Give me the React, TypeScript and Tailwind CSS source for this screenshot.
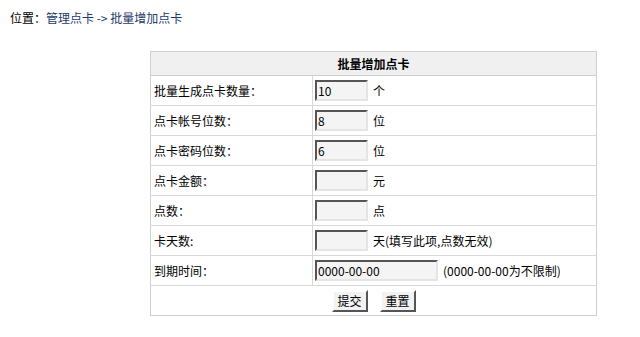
const font = { fontFamily: '"Noto Sans CJK SC", "Noto Sans", sans-serif' };

const rows = [
  { label: "批量生成点卡数量：", value: "10", unit: "个" },
  { label: "点卡帐号位数：", value: "8", unit: "位" },
  { label: "点卡密码位数：", value: "6", unit: "位" },
  { label: "点卡金额：", value: "", unit: "元" },
  { label: "点数：", value: "", unit: "点" },
  { label: "卡天数:", value: "", unit: "天(填写此项,点数无效)" },
];

function Field({ value, wide }: { value: string; wide?: boolean }) {
  return (
    <input
      readOnly
      value={value}
      className={`${wide ? "w-[123px]" : "w-[53px]"} h-[21px] px-[1px] text-[12px] text-black bg-[#f4f4f4] border-2 border-t-[#555] border-l-[#555] border-b-[#e4e4e4] border-r-[#e4e4e4] outline-none align-middle`}
      style={font}
    />
  );
}

function Btn({ children }: { children: string }) {
  return (
    <button
      className="h-[22px] w-[36px] text-[12px] text-black bg-[#f2f2f2] border-2 border-t-white border-l-white border-b-[#555] border-r-[#555] leading-none"
      style={font}
    >
      {children}
    </button>
  );
}

export default function App() {
  return (
    <div className="w-[640px] h-[337px] bg-white text-[12px] text-black" style={font}>
      <div className="pt-[10px] pl-[10px] leading-[16px]">
        位置：<span className="text-[#1d3b6c]">管理点卡 -&gt; 批量增加点卡</span>
      </div>

      <table className="mt-[25px] ml-[150px] w-[447px] border-collapse border border-[#cfcfcf]">
        <tbody>
          <tr className="h-[24px] bg-[#f0f0f0]">
            <td colSpan={2} className="text-center font-bold border-b border-[#cfcfcf]">
              批量增加点卡
            </td>
          </tr>
          {rows.map((r) => (
            <tr key={r.label} className="h-[30px]">
              <td className="w-[162px] pl-[3px] border-b border-r border-[#d8d8d8]">{r.label}</td>
              <td className="pl-[2px] border-b border-[#d8d8d8]">
                <Field value={r.value} />
                <span className="ml-[5px] align-middle">{r.unit}</span>
              </td>
            </tr>
          ))}
          <tr className="h-[30px]">
            <td className="pl-[3px] border-b border-r border-[#d8d8d8]">到期时间：</td>
            <td className="pl-[2px] border-b border-[#d8d8d8]">
              <Field value="0000-00-00" wide />
              <span className="ml-[5px] align-middle">(0000-00-00为不限制)</span>
            </td>
          </tr>
          <tr className="h-[30px]">
            <td colSpan={2}>
              <div className="flex justify-center gap-[12px]">
                <Btn>提交</Btn>
                <Btn>重置</Btn>
              </div>
            </td>
          </tr>
        </tbody>
      </table>
    </div>
  );
}
